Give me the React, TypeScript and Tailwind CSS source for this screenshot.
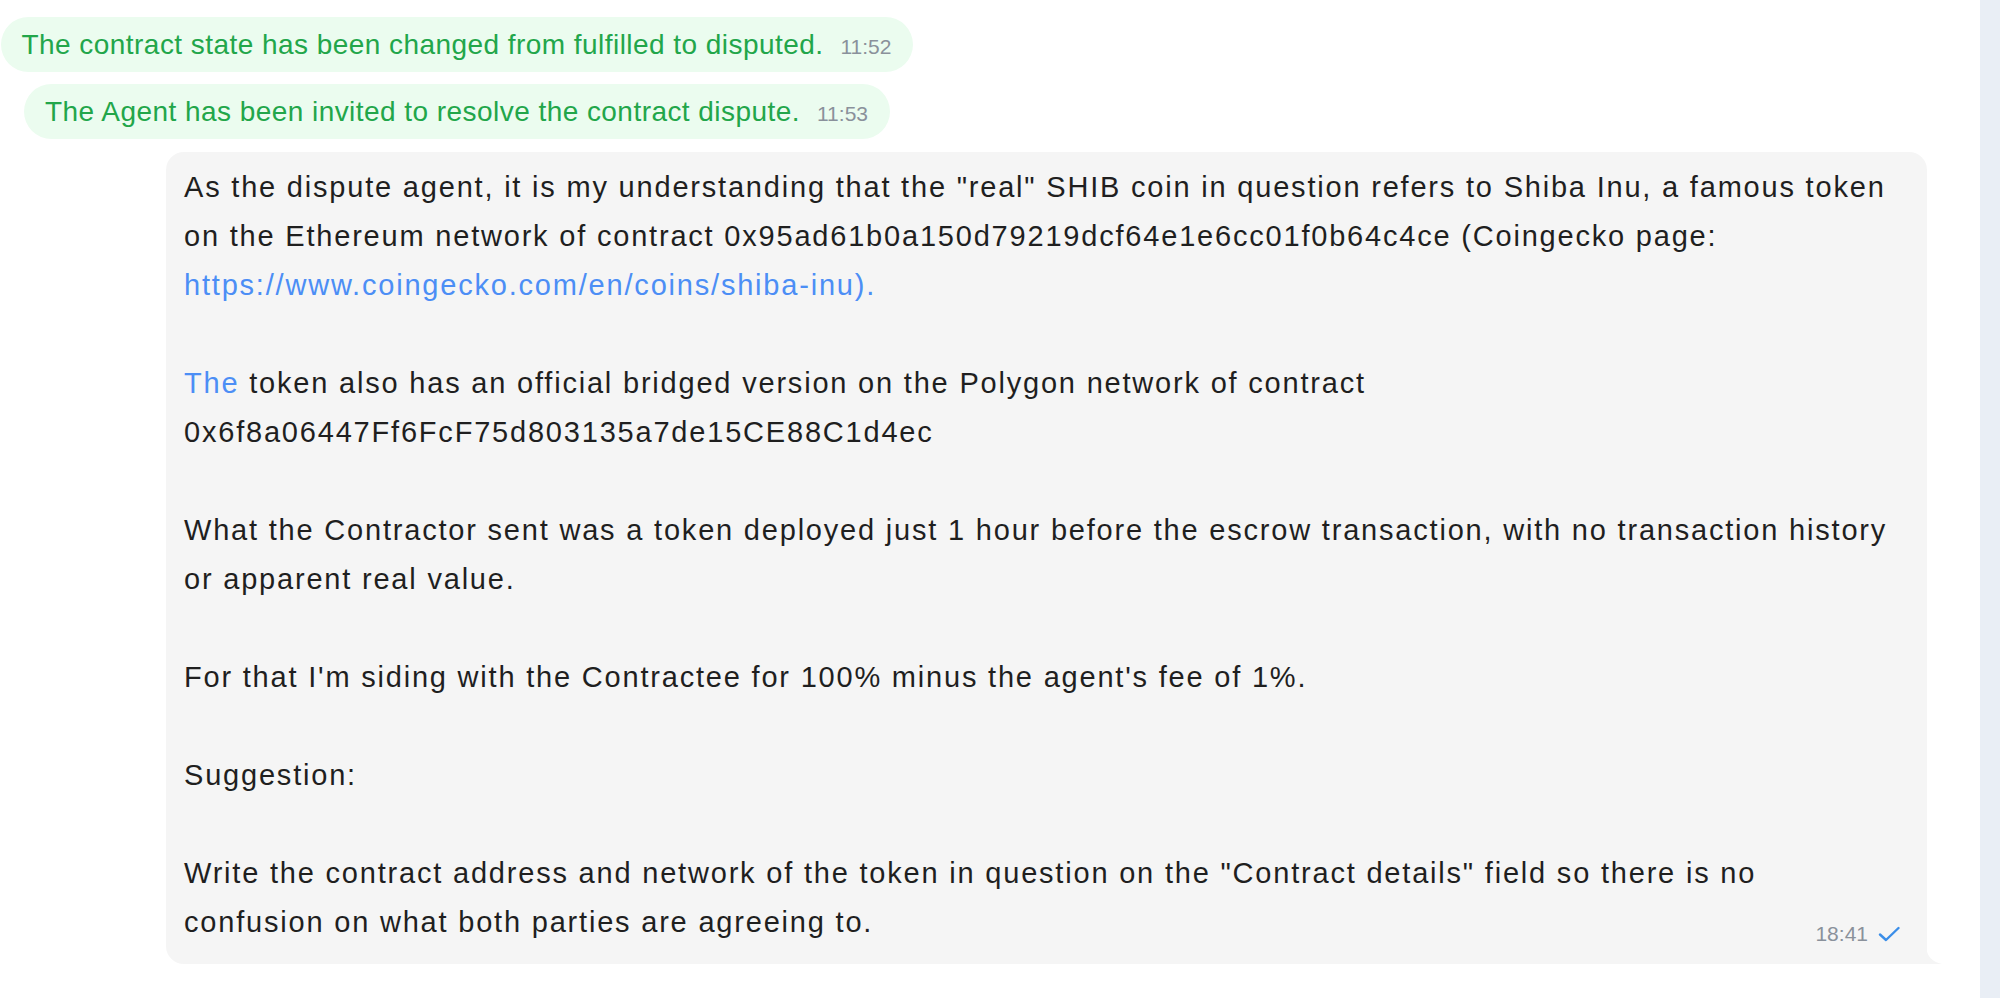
import React from "react";

const lines: (string | { blue: string; rest?: string } | null)[] = [
  'As the dispute agent, it is my understanding that the "real" SHIB coin in question refers to Shiba Inu, a famous token',
  "on the Ethereum network of contract 0x95ad61b0a150d79219dcf64e1e6cc01f0b64c4ce (Coingecko page:",
  { blue: "https://www.coingecko.com/en/coins/shiba-inu)." },
  null,
  { blue: "The", rest: " token also has an official bridged version on the Polygon network of contract" },
  "0x6f8a06447Ff6FcF75d803135a7de15CE88C1d4ec",
  null,
  "What the Contractor sent was a token deployed just 1 hour before the escrow transaction, with no transaction history",
  "or apparent real value.",
  null,
  "For that I'm siding with the Contractee for 100% minus the agent's fee of 1%.",
  null,
  "Suggestion:",
  null,
  'Write the contract address and network of the token in question on the "Contract details" field so there is no',
];

function Line({ l }: { l: (typeof lines)[number] }) {
  if (l === null) return <div className="h-[49px]" />;
  if (typeof l === "string") return <div className="h-[49px] whitespace-nowrap">{l}</div>;
  return (
    <div className="h-[49px] whitespace-nowrap">
      <span className="text-[#4c8ef5]">{l.blue}</span>
      {l.rest}
    </div>
  );
}

function Pill({ text, time }: { text: string; time: string }) {
  return (
    <div className="h-[55px] rounded-full bg-[#ebfcef] flex items-center pl-[21px] pr-[22px] whitespace-nowrap">
      <span className="text-[28px] tracking-[0.45px] text-[#22a64a]">{text}</span>
      <span className="ml-[17px] text-[21px] text-[#8a919b] translate-y-[2px]">{time}</span>
    </div>
  );
}

export default function App() {
  return (
    <div
      className="w-full h-[998px] bg-white flex overflow-hidden"
      style={{ fontFamily: '"Liberation Sans", Arial, sans-serif' }}
    >
      <div className="flex-1 flex flex-col pt-[17px]">
        <div className="w-[914px] flex flex-col items-center gap-[12px]">
          <Pill text="The contract state has been changed from fulfilled to disputed." time="11:52" />
          <Pill text="The Agent has been invited to resolve the contract dispute." time="11:53" />
        </div>
        <div className="relative ml-[166px] mt-[13px] w-[1761px]">
          <div className="bg-[#f5f5f5] rounded-[18px] rounded-br-none pt-[11px] pb-[17px] pl-[18px] pr-[27px] text-[29px] tracking-[1.8px] leading-[49px] text-[#1f1f1f]">
            {lines.map((l, i) => (
              <Line key={i} l={l} />
            ))}
            <div className="flex items-end justify-between">
              <div className="h-[49px] whitespace-nowrap">confusion on what both parties are agreeing to.</div>
              <div className="flex items-center gap-[10px] mb-[1px] tracking-normal">
                <span className="text-[21px] leading-[24px] text-[#8a919b]">18:41</span>
                <svg width="22" height="16" viewBox="0 0 22 16" fill="none">
                  <path d="M2 8.5 L8 14 L20.5 2" stroke="#3b8ee8" strokeWidth="2.4" strokeLinecap="round" strokeLinejoin="round" />
                </svg>
              </div>
            </div>
          </div>
          <svg
            className="absolute bottom-0 right-[-15px]"
            width="16"
            height="18"
            viewBox="0 0 16 18"
          >
            <path d="M0 0 Q1 15 16 18 L0 18 Z" fill="#f5f5f5" />
          </svg>
        </div>
      </div>
      <div className="w-[20px] h-full bg-[#e9eef5]" />
    </div>
  );
}
